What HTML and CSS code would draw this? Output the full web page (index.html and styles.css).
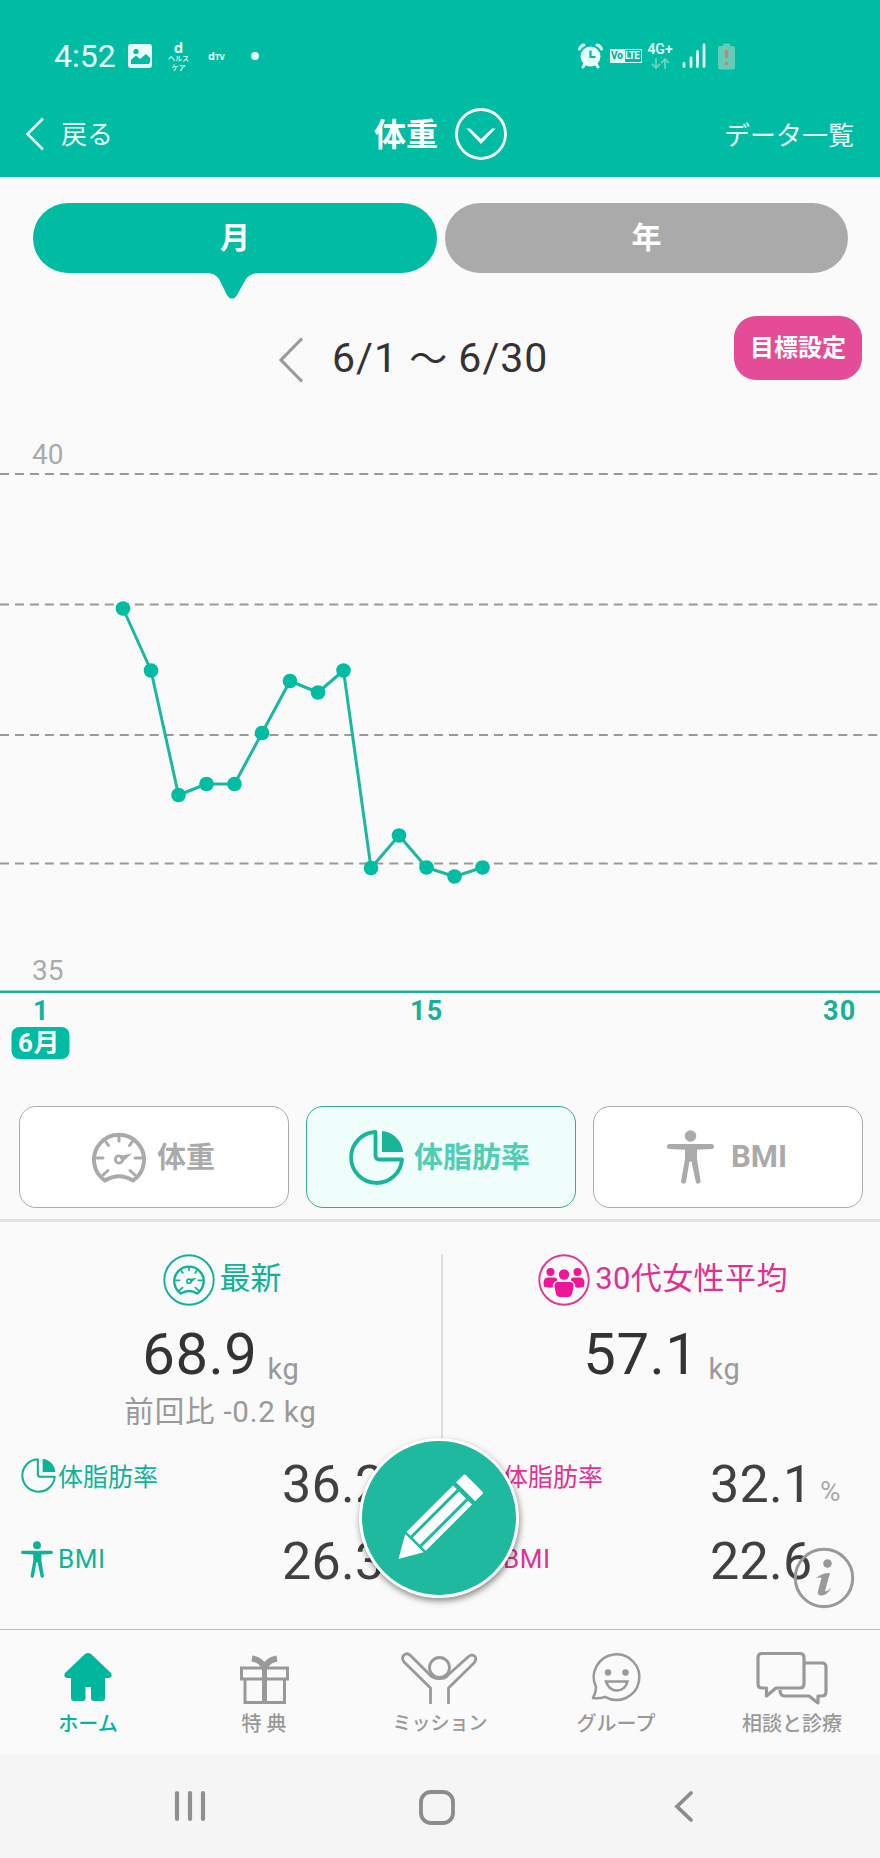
FILE: index.html
```html
<!DOCTYPE html>
<html lang="ja">
<head>
<meta charset="utf-8">
<title>体重</title>
<link rel="stylesheet" href="styles.css">
</head>
<body>
<svg class="defs" width="0" height="0">
  <symbol id="gauge" viewBox="0 0 54 51">
    <path d="M13 48.500A25 25 0 1 1 41 48.500Q27 40 13 48.500Z" fill="none" stroke="currentColor" stroke-width="4" stroke-linejoin="round"/>
    <path d="M27 4v5M14 10l2.500 3.500M40 10l-2.500 3.500M5 26h6M43 26h6M11 43l5-4.500M43 43l-5-4.500" fill="none" stroke="currentColor" stroke-width="3" stroke-linecap="round"/>
    <circle cx="27" cy="27.500" r="3.600" fill="none" stroke="currentColor" stroke-width="2.800"/>
    <path d="M27.500 24L40 21.500L30 30.500Z" fill="currentColor"/>
  </symbol>
  <symbol id="pie" viewBox="0 0 55 55">
    <path d="M26.500 2A25.500 25.500 0 1 0 53 29.500H31Q26.500 29.500 26.500 25Z" fill="none" stroke="currentColor" stroke-width="3.800" stroke-linejoin="round"/>
    <path d="M33 1A23 23 0 0 1 54 22H33Z" fill="currentColor"/>
  </symbol>
  <symbol id="pie-thin" viewBox="0 0 55 55">
    <path d="M26.500 2A25.500 25.500 0 1 0 53 29.500H31Q26.500 29.500 26.500 25Z" fill="none" stroke="currentColor" stroke-width="3.200" stroke-linejoin="round"/>
    <path d="M34 1A23 23 0 0 1 54 22H34Z" fill="currentColor"/>
  </symbol>
  <symbol id="person" viewBox="0 0 47 54">
    <circle cx="23.500" cy="6" r="5.800" fill="currentColor"/>
    <path d="M2.500 14H44.500A2.500 2.500 0 0 1 44.500 19L30 19.800V29L33.500 50.500A2.400 2.400 0 0 1 28.800 51.800L24.500 31.500H22.500L19 51.800A2.400 2.400 0 0 1 14.200 50.500L18 29V19.800L2.500 19A2.500 2.500 0 0 1 2.500 14Z" fill="currentColor"/>
  </symbol>
</svg>

<header class="header">
  <div class="status">
    <span class="clock">4:52</span>
    <svg class="st-pic" width="24" height="24"><rect width="24" height="24" rx="3" fill="#e9fffa"/><circle cx="8" cy="7.500" r="2.600" fill="#00bca2"/><path d="M3 20V16l5-4.500 4 3.500 6-5 4 4v4q0 2-2 2Z" fill="#00bca2"/></svg>
    <span class="st-health"><b>d</b><i>ヘルス</i><i>ケア</i></span>
    <span class="st-dtv">d<small>TV</small></span>
    <span class="st-dot"></span>
    <svg class="st-alarm" width="25" height="26" viewBox="0 0 25 26"><path d="M1.500 6Q3 2.500 6 2M23.500 6Q22 2.500 19 2M5 24l2-3M20 24l-2-3" stroke="#e9fffa" stroke-width="3" stroke-linecap="round" fill="none"/><circle cx="12.500" cy="13.500" r="10" fill="#e9fffa"/><path d="M12.500 7.500v6.500h5" stroke="#00bca2" stroke-width="2.200" fill="none"/></svg>
    <span class="st-volte"><b>Vo</b><span>LTE</span></span>
    <span class="st-net"><b>4G+</b><svg width="19" height="13" viewBox="0 0 19 13"><path d="M5 1v10M1 7l4 4 4-4M14 12V2M10 6l4-4 4 4" fill="none" stroke="#62d4c1" stroke-width="1.800"/></svg></span>
    <svg class="st-signal" width="24" height="26"><path d="M2 20.500v3M9 15v8.500M15.500 8.500v15M22 2v21.500" stroke="#dffcf6" stroke-width="2.800" stroke-linecap="round"/></svg>
    <svg class="st-batt" width="17" height="27"><path d="M5 3V1.500Q5 .5 6 .5h5q1 0 1 1V3h3q2 0 2 2v19q0 2.500-2 2.500H2q-2 0-2-2.500V5q0-2 2-2Z" fill="#63cdb9"/><path d="M8.500 7v8M8.500 19v3" stroke="#c98471" stroke-width="3.400"/></svg>
  </div>
  <nav class="titlebar">
    <a class="back"><svg width="19" height="34"><path d="M18 1.500L2.500 17l15.500 15.500" fill="none" stroke="#e4fffa" stroke-width="2.600"/></svg><span>戻る</span></a>
    <h1 class="title"><span>体重</span><svg width="52" height="52"><circle cx="26" cy="26" r="24.500" fill="none" stroke="#fff" stroke-width="2.800"/><path d="M11.500 20.500h3.500l11 10.500 11-10.500h3.500L26 36Z" fill="#fff"/></svg></h1>
    <a class="list">データ一覧</a>
  </nav>
</header>

<main>
  <div class="tabs">
    <div class="tab tab-on"><span>月</span><svg class="pointer" width="52" height="28"><path d="M0 1Q8 1 12 7L20 23Q22 26.500 25 26.500Q28 26.500 30 23L39 7Q43 1 52 1V0H0Z" fill="#00bca2"/></svg></div>
    <div class="tab">年</div>
  </div>
  <div class="period">
    <svg class="prev" width="25" height="46"><path d="M24 1.500L3 23 24 44.500" fill="none" stroke="#999" stroke-width="3.200"/></svg>
    <span class="range">6/1 <span class="wave">〜</span> 6/30</span>
    <button class="goal">目標設定</button>
  </div>

  <svg class="chart" width="880" height="660" viewBox="0 420 880 660">
    <g class="grid"><path d="M0 474H880"/><path d="M0 604.500H880"/><path d="M0 735H880"/><path d="M0 863.500H880"/></g>
    <path class="axis" d="M0 991.700H880"/>
    <polyline class="line" points="123,608.500 151,670.500 178.500,795 206.500,784 234.500,784 262,733 290,681 318,692.500 343.500,670.500 371,868 399,835.500 426.500,867.500 454.500,876.500 482.500,867.500"/>
    <g class="dots"><circle cx="123" cy="608.500" r="7.300"/><circle cx="151" cy="670.500" r="7.300"/><circle cx="178.500" cy="795" r="7.300"/><circle cx="206.500" cy="784" r="7.300"/><circle cx="234.500" cy="784" r="7.300"/><circle cx="262" cy="733" r="7.300"/><circle cx="290" cy="681" r="7.300"/><circle cx="318" cy="692.500" r="7.300"/><circle cx="343.500" cy="670.500" r="7.300"/><circle cx="371" cy="868" r="7.300"/><circle cx="399" cy="835.500" r="7.300"/><circle cx="426.500" cy="867.500" r="7.300"/><circle cx="454.500" cy="876.500" r="7.300"/><circle cx="482.500" cy="867.500" r="7.300"/></g>
    <g class="ylab"><text x="32" y="464">40</text><text x="32" y="980">35</text></g>
    <g class="xlab"><text x="33" y="1019.500">1</text><text x="410" y="1019.500">15</text><text x="823" y="1019.500">30</text></g>
    <rect x="11.500" y="1027" width="58" height="32" rx="8" fill="#00bca2"/>
    <text class="month" x="18" y="1051.500">6月</text>
  </svg>

  <div class="metrics">
    <button class="metric"><svg class="ic-gauge"><use href="#gauge"/></svg><span>体重</span></button>
    <button class="metric metric-on"><svg class="ic-pie"><use href="#pie"/></svg><span>体脂肪率</span></button>
    <button class="metric metric-bmi"><svg class="ic-person"><use href="#person"/></svg><span>BMI</span></button>
  </div>

  <div class="stats">
    <section class="stat">
      <h2 class="stat-head"><svg width="52" height="52"><circle cx="26" cy="26" r="24.700" fill="none" stroke="currentColor" stroke-width="1.900"/><use href="#gauge" x="10" y="11" width="32" height="30"/></svg><span>最新</span></h2>
      <p class="value"><b>68.9</b><small>kg</small></p>
      <p class="diff">前回比 -0.2 kg</p>
      <div class="row"><span class="label"><svg class="sm-pie"><use href="#pie-thin"/></svg>体脂肪率</span><b>36.2</b><small>%</small></div>
      <div class="row row-bmi"><span class="label"><svg class="sm-person"><use href="#person"/></svg>BMI</span><b>26.3</b></div>
    </section>
    <section class="stat stat-avg">
      <h2 class="stat-head"><svg width="52" height="52"><circle cx="26" cy="26" r="24.700" fill="none" stroke="#e0388f" stroke-width="1.900"/><g fill="#f0149a"><circle cx="12.500" cy="18" r="4"/><circle cx="39.500" cy="18" r="4"/><path d="M6 32.500Q4 23 11 23.500H15Q19.500 23 19 26.500Q15 28 14.500 33.500Q8 34 6 32.500ZM46 32.500Q48 23 41 23.500H37Q32.500 23 33 26.500Q37 28 37.500 33.500Q44 34 46 32.500Z"/><circle cx="26" cy="20.500" r="5.200"/><path d="M20 28H32Q36 28 35.500 33L34 40Q33 43 30 43H22Q19 43 18 40L16.500 33Q16 28 20 28Z"/></g></svg><span>30代女性平均</span></h2>
      <p class="value"><b>57.1</b><small>kg</small></p>
      <p class="diff"></p>
      <div class="row"><span class="label"><svg class="sm-pie"><use href="#pie-thin"/></svg>体脂肪率</span><b>32.1</b><small>%</small></div>
      <div class="row row-bmi"><span class="label"><svg class="sm-person"><use href="#person"/></svg>BMI</span><b>22.6</b></div>
    </section>
    <button class="fab"><svg width="154" height="154"><g transform="translate(36.500 118) rotate(-45)" fill="#fff"><path d="M0 0L22.500-13V13Z"/><path d="M25-13.500H90.500V-8H25ZM25-5H90.500V5H25ZM25 8H90.500V13.500H25ZM95-13.500H105Q107-13.500 107-11.500V11.500Q107 13.500 105 13.500H95Z"/></g></svg></button>
    <svg class="info" width="62" height="62"><circle cx="31" cy="31" r="28.700" fill="none" stroke="#999" stroke-width="3"/><circle cx="34.500" cy="16.500" r="4.300" fill="#999"/><path d="M23 31Q29 26 37 26L32 44Q34 45 38.500 40.500Q34 49 27 48.500Q24 47.500 25 44L28.500 31Q27 30 23 31Z" fill="#999"/></svg>
  </div>
</main>

<nav class="tabbar">
  <a class="item item-on"><svg width="50" height="54"><path d="M22 2Q25 0 28 2L48 21Q50 25 46 26H42V46Q42 49 39 49H31Q28 49 28 46V35H22.500V46Q22.500 49 19.500 49H11Q8 49 8 46V26H4Q0 25 2 21Z" fill="currentColor"/></svg><span>ホーム</span></a>
  <a class="item item-gift"><svg width="50" height="54" fill="none" stroke="currentColor" stroke-width="3"><path d="M2.500 16H48.500V27H2.500ZM6 28V50.500H45.500V28"/><path d="M25.500 16V50" stroke-width="5"/><path d="M25 15Q22 8 13 6.500M26 15Q29 8 38 6.500" stroke-width="6"/></svg><span>特典</span></a>
  <a class="item item-mission"><svg width="80" height="54" fill="none" stroke="currentColor" stroke-width="2.800"><circle cx="39.500" cy="15.500" r="10"/><path d="M30.500 52V36L4 10Q1 6 4 3Q7.500 0 11 4L30 23Q33 26.500 39.500 26.500T48 23L68 5Q72 1.500 75 4.500Q77 7 74 11L48.500 36V52" stroke-linejoin="round"/></svg><span>ミッション</span></a>
  <a class="item"><svg width="50" height="54" fill="none" stroke="currentColor" stroke-width="2.500"><path d="M5 35A22.800 22.800 0 1 1 14 44.800Q8 47 2 46Q5 41 5 35Z" stroke-linejoin="round"/><circle cx="17" cy="20.500" r="3.200" fill="currentColor" stroke="none"/><circle cx="34.500" cy="20.500" r="3.200" fill="currentColor" stroke="none"/><path d="M15 29.500H36.500Q34 38.500 26 38.500T15 29.500Z"/></svg><span>グループ</span></a>
  <a class="item item-talk"><svg width="72" height="54" fill="none" stroke="currentColor" stroke-width="3.200" stroke-linejoin="round"><path d="M6 1.500H44Q48 1.500 48 5.500V32Q48 36 44 36H20L10.500 44V36H6Q2 36 2 32V5.500Q2 1.500 6 1.500Z"/><path d="M49 11H66Q70 11 70 15V40Q70 44 66 44H62V51L53 44H28Q24 43.500 24 38"/></svg><span>相談と診療</span></a>
</nav>
<footer class="sysbar">
  <svg width="32" height="34"><path d="M3 3V29M16 3V29M29 3V29" stroke="#909090" stroke-width="4.200" stroke-linecap="round"/></svg>
  <svg width="36" height="36"><rect x="2" y="2" width="32" height="31" rx="10" fill="none" stroke="#8c8c8c" stroke-width="3.800"/></svg>
  <svg width="20" height="34"><path d="M17 3L3 16.500L17 30" fill="none" stroke="#8c8c8c" stroke-width="3.800" stroke-linecap="round"/></svg>
</footer>
</body>
</html>
```

FILE: styles.css
```css
* { box-sizing: border-box; }
body { margin: 0; width: 880px; background: #fafafa; font-family: Roboto, "Noto Sans CJK JP", sans-serif; color: #333; }
h1, h2, p { margin: 0; font-weight: 400; }
button { font: inherit; border: 0; padding: 0; }
svg { display: block; flex: none; overflow: visible; }
.defs { position: absolute; }

.header { height: 177px; background: #00bca2; color: #e9fffa; }
.status { display: flex; align-items: center; height: 95px; padding: 17px 0 0 54px; }
.clock { width: 74px; font-size: 32px; line-height: 38px; }
.st-health { width: 23px; margin-left: 15px; display: flex; flex-direction: column; align-items: center; line-height: 9px; }
.st-health b { font: 700 15px/15px "Open Sans", sans-serif; }
.st-health i { font-style: normal; font-size: 7px; font-weight: 500; white-space: nowrap; }
.st-dtv { width: 20px; margin-left: 18px; font: 700 11px/12px "Open Sans", sans-serif; white-space: nowrap; }
.st-dtv small { font-size: 8px; }
.st-dot { width: 8px; height: 8px; margin-left: 23px; border-radius: 50%; background: #e9fffa; }
.st-alarm { margin-left: 319px; }
.st-volte { display: flex; width: 32px; height: 14px; margin-left: 7px; border: 1px solid #dffcf6; font-size: 10px; line-height: 12px; }
.st-volte b { width: 14px; background: #dffcf6; color: #00a58e; }
.st-volte span { font-weight: 700; letter-spacing: -.6px; }
.st-net { width: 26px; margin-left: 5px; display: flex; flex-direction: column; align-items: center; gap: 1px; }
.st-net b { font-size: 14px; line-height: 13px; font-weight: 600; }
.st-signal { margin-left: 9px; }
.st-batt { margin-left: 12px; }

.titlebar { display: grid; grid-template-columns: 280px 320px 280px; align-items: center; height: 78px; }
.back { display: flex; align-items: center; gap: 17px; padding-left: 25px; font-size: 26px; line-height: 34px; }
.back span { padding-top: 2px; }
.title { display: flex; align-items: center; gap: 17px; padding-left: 94px; font-size: 32px; line-height: 40px; font-weight: 700; color: #fff; }
.title span { padding-top: 1px; }
.list { padding: 3px 26px 0 0; text-align: right; font-size: 26px; line-height: 34px; }

.tabs { display: grid; grid-template-columns: 404px 403px; gap: 8px; padding: 26px 0 0 33px; }
.tab { position: relative; height: 70px; border-radius: 35px; background: #aaa; color: #fff; font-size: 30px; line-height: 70px; font-weight: 700; text-align: center; }
.tab-on { background: #00bca2; }
.pointer { position: absolute; left: 174px; top: 69px; }

.period { display: grid; grid-template-columns: 54px 402px 128px; height: 147px; padding-left: 278px; align-items: start; }
.prev { margin-top: 64px; }
.range { margin-top: 61px; font-size: 41px; line-height: 48px; letter-spacing: 1px; white-space: nowrap; }
.wave { display: inline-block; width: 38px; font-size: 38px; }
.goal { height: 64px; margin-top: 43px; border-radius: 22px; background: #e54c98; color: #fff; font-size: 24px; line-height: 63px; font-weight: 700; }

.grid path { stroke: #999; stroke-width: 2; stroke-dasharray: 9 5.970; }
.axis { stroke: #18b197; stroke-width: 2.400; }
.line { fill: none; stroke: #1bb79e; stroke-width: 3; stroke-linejoin: round; }
.dots { fill: #00bda2; }
.ylab { font-size: 28px; fill: #aaa; }
.xlab { font-size: 27px; font-weight: 700; fill: #18b197; letter-spacing: 1.200px; }
.month { font-size: 26px; font-weight: 700; fill: #fff; letter-spacing: .5px; }

.metrics { display: grid; grid-template-columns: repeat(3, 270px); gap: 17px; height: 142px; padding: 26px 0 0 19px; border-bottom: 3px solid #e2e2e2; }
.metric { display: flex; align-items: center; gap: 11px; height: 102px; padding-left: 72px; border: 1.500px solid #aaa; border-radius: 17px; background: #fff; color: #aaa; font-size: 29px; line-height: 40px; font-weight: 700; }
.metric span { padding-top: 2px; }
.metric-on { gap: 10px; padding-left: 42px; border-color: #30ab90; background: #effdfb; color: #18b599; }
.metric-on span { color: #4fceb5; }
.metric-bmi { gap: 17px; padding-left: 73px; }
.metric-bmi span { padding-top: 0; font-size: 31px; }
.ic-gauge { width: 54px; height: 51px; }
.ic-pie { width: 55px; height: 55px; }
.ic-person { width: 47px; height: 54px; }

.stats { position: relative; display: grid; grid-template-columns: 441px 439px; height: 407px; padding-top: 32px; }
.stat { height: 366px; color: #10b297; }
.stat-avg { color: #df3190; background: linear-gradient(#ddd, #ddd) left top / 2px 220px no-repeat; padding-left: 2px; }
.stat-head { display: flex; justify-content: center; gap: 5px; height: 51px; padding-left: 3px; font-size: 31px; }
.stat-head span { line-height: 50px; }
.stat-avg .stat-head { letter-spacing: .4px; }
.value { display: flex; justify-content: center; align-items: flex-end; gap: 10px; margin-top: 19px; padding-left: 1px; }
.value b { font-size: 58px; line-height: 60px; font-weight: 400; letter-spacing: .5px; color: #333; }
.value small { font-size: 29px; line-height: 30px; letter-spacing: .8px; color: #999; }
.diff { height: 36px; margin: 10px 0 16px; font-size: 29.500px; line-height: 37px; letter-spacing: .8px; text-align: center; color: #999; }
.row { display: grid; grid-template-columns: 261px 111px 40px; height: 77px; padding-left: 21px; align-items: start; }
.stat-avg .row { grid-template-columns: 244px 110px 40px; padding-left: 23px; }
.label { display: flex; align-items: center; gap: 2px; height: 58px; font-size: 25px; white-space: nowrap; }
.row-bmi .label { height: 72px; gap: 5px; font-size: 26px; letter-spacing: .5px; }
.row b { font-size: 52px; line-height: 77px; font-weight: 400; letter-spacing: .3px; color: #404040; }
.row small { font-size: 28px; line-height: 92px; color: #aaa; }
.sm-pie { width: 35px; height: 35px; }
.sm-person { width: 32px; height: 37px; }
.fab { position: absolute; left: 359px; top: 216px; width: 160px; height: 160px; border: 3px solid #fff; border-radius: 50%; background: #1fb9a0; box-shadow: 1px 3px 6px rgba(0,0,0,.45); }
.info { position: absolute; left: 793px; top: 325px; }

.tabbar { display: grid; grid-template-columns: repeat(5, 176px); height: 126px; padding-top: 22px; border-top: 1px solid #bbb; color: #999; }
.item { display: flex; flex-direction: column; align-items: center; font-size: 20px; line-height: 30px; }
.item span { margin-top: 3px; font-weight: 500; }
.item-on { color: #00b79e; }
.item-gift span { letter-spacing: 5px; padding-left: 5px; }
.item-mission span { font-size: 19px; }
.sysbar { display: grid; grid-template-columns: 246px 247px 247px; height: 103px; padding: 31px 0 0 67px; justify-items: center; align-items: start; background: #f5f5f5; }
.sysbar svg { margin-top: 4px; }
```
